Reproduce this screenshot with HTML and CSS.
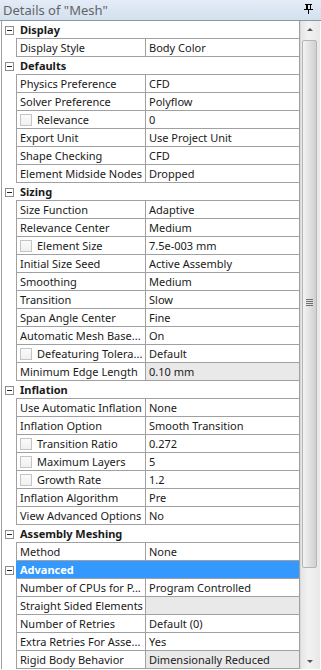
FILE: index.html
```html
<!DOCTYPE html>
<html>
<head>
  <title>Details of "Mesh"</title>
  <link rel="stylesheet" href="styles.css">
</head>
<body>
  <div class="panel">
    <div class="title-bar">
      <span class="title">Details of "Mesh"</span>
      <svg class="pin" width="9" height="10" viewBox="0 0 9 10">
        <path d="M1 0.5H8M2.5 0.5V5M6.5 0.5V5M3.5 1V5" stroke="#000" stroke-width="1" fill="none"/>
        <path d="M0 5.5H9" stroke="#000" stroke-width="1"/>
        <path d="M4.5 5.5V10" stroke="#000" stroke-width="1"/>
      </svg>
    </div>

    <div class="details">
      <div class="grid">
        <div class="row group"><span class="toggle"></span><div class="group-cell">Display</div></div>
        <div class="row"><span class="gutter"></span><div class="name">Display Style</div><div class="value">Body Color</div></div>

        <div class="row group"><span class="toggle"></span><div class="group-cell">Defaults</div></div>
        <div class="row"><span class="gutter"></span><div class="name">Physics Preference</div><div class="value">CFD</div></div>
        <div class="row"><span class="gutter"></span><div class="name">Solver Preference</div><div class="value">Polyflow</div></div>
        <div class="row"><span class="gutter"></span><div class="name"><span class="check"></span>Relevance</div><div class="value">0</div></div>
        <div class="row"><span class="gutter"></span><div class="name">Export Unit</div><div class="value">Use Project Unit</div></div>
        <div class="row"><span class="gutter"></span><div class="name">Shape Checking</div><div class="value">CFD</div></div>
        <div class="row"><span class="gutter"></span><div class="name">Element Midside Nodes</div><div class="value">Dropped</div></div>

        <div class="row group"><span class="toggle"></span><div class="group-cell">Sizing</div></div>
        <div class="row"><span class="gutter"></span><div class="name">Size Function</div><div class="value">Adaptive</div></div>
        <div class="row"><span class="gutter"></span><div class="name">Relevance Center</div><div class="value">Medium</div></div>
        <div class="row"><span class="gutter"></span><div class="name"><span class="check"></span>Element Size</div><div class="value">7.5e-003 mm</div></div>
        <div class="row"><span class="gutter"></span><div class="name">Initial Size Seed</div><div class="value">Active Assembly</div></div>
        <div class="row"><span class="gutter"></span><div class="name">Smoothing</div><div class="value">Medium</div></div>
        <div class="row"><span class="gutter"></span><div class="name">Transition</div><div class="value">Slow</div></div>
        <div class="row"><span class="gutter"></span><div class="name">Span Angle Center</div><div class="value">Fine</div></div>
        <div class="row"><span class="gutter"></span><div class="name">Automatic Mesh Base...</div><div class="value">On</div></div>
        <div class="row"><span class="gutter"></span><div class="name"><span class="check"></span>Defeaturing Tolera...</div><div class="value">Default</div></div>
        <div class="row"><span class="gutter"></span><div class="name">Minimum Edge Length</div><div class="value readonly">0.10 mm</div></div>

        <div class="row group"><span class="toggle"></span><div class="group-cell">Inflation</div></div>
        <div class="row"><span class="gutter"></span><div class="name">Use Automatic Inflation</div><div class="value">None</div></div>
        <div class="row"><span class="gutter"></span><div class="name">Inflation Option</div><div class="value">Smooth Transition</div></div>
        <div class="row"><span class="gutter"></span><div class="name"><span class="check"></span>Transition Ratio</div><div class="value">0.272</div></div>
        <div class="row"><span class="gutter"></span><div class="name"><span class="check"></span>Maximum Layers</div><div class="value">5</div></div>
        <div class="row"><span class="gutter"></span><div class="name"><span class="check"></span>Growth Rate</div><div class="value">1.2</div></div>
        <div class="row"><span class="gutter"></span><div class="name">Inflation Algorithm</div><div class="value">Pre</div></div>
        <div class="row"><span class="gutter"></span><div class="name">View Advanced Options</div><div class="value">No</div></div>

        <div class="row group"><span class="toggle"></span><div class="group-cell">Assembly Meshing</div></div>
        <div class="row"><span class="gutter"></span><div class="name">Method</div><div class="value">None</div></div>

        <div class="row group"><span class="toggle"></span><div class="group-cell selected">Advanced</div></div>
        <div class="row"><span class="gutter"></span><div class="name">Number of CPUs for P...</div><div class="value">Program Controlled</div></div>
        <div class="row"><span class="gutter"></span><div class="name">Straight Sided Elements</div><div class="value readonly"></div></div>
        <div class="row"><span class="gutter"></span><div class="name">Number of Retries</div><div class="value">Default (0)</div></div>
        <div class="row"><span class="gutter"></span><div class="name">Extra Retries For Asse...</div><div class="value">Yes</div></div>
        <div class="row"><span class="gutter"></span><div class="name">Rigid Body Behavior</div><div class="value readonly">Dimensionally Reduced</div></div>
      </div>

      <div class="scrollbar">
        <span class="arrow up"></span>
        <div class="thumb"><span class="grip"></span></div>
        <span class="arrow down"></span>
      </div>
    </div>
  </div>
</body>
</html>
```

FILE: styles.css
```css
body {
  margin: 0;
  background: #fff;
  font-family: "Noto Sans", "Open Sans", sans-serif;
  font-size: 11px;
  color: #1a1a1a;
}

.panel {
  width: 321px;
  height: 670px;
  overflow: hidden;
}

.title-bar {
  height: 20px;
  border-bottom: 1px solid #8a96a6;
  background: linear-gradient(#e3ecf7, #d4e0ef);
  display: flex;
  align-items: center;
  justify-content: space-between;
  padding: 0 8px 0 3px;
}

.title {
  color: #646464;
  font-size: 13px;
  line-height: 20px;
}

.pin {
  display: block;
  margin-top: -3px;
}

.details {
  display: flex;
  padding-left: 1px;
}

.grid {
  width: 297px;
  border-left: 1px solid #a0a0a0;
  border-right: 1px solid #a0a0a0;
}

.row {
  display: flex;
  height: 18px;
}

.gutter,
.toggle {
  width: 14px;
  flex: none;
  position: relative;
}

.toggle::before {
  content: "";
  position: absolute;
  left: 3px;
  top: 5px;
  width: 7px;
  height: 7px;
  border: 1px solid #8c8c8c;
  background: #fff;
}

.toggle::after {
  content: "";
  position: absolute;
  left: 5px;
  top: 9px;
  width: 5px;
  height: 1px;
  background: #222;
}

.name,
.value,
.group-cell {
  height: 17px;
  line-height: 17px;
  border-bottom: 1px solid #a0a0a0;
  white-space: nowrap;
  overflow: hidden;
  display: flex;
  align-items: center;
}

.name {
  width: 125px;
  flex: none;
  border-left: 1px solid #a0a0a0;
  padding-left: 3px;
}

.value {
  flex: 1;
  border-left: 1px solid #a0a0a0;
  padding-left: 3px;
}

.value.readonly {
  background: #e9e9e9;
}

.group-cell {
  flex: 1;
  padding-left: 4px;
  font-weight: bold;
}

.group-cell.selected {
  background: #3399ff;
  color: #fff;
}

.check {
  width: 10px;
  height: 10px;
  border: 1px solid #c4c4c4;
  background: linear-gradient(#fafafa, #f0f0f0);
  margin-right: 5px;
  flex: none;
}

.scrollbar {
  width: 19px;
  height: 648px;
  background: linear-gradient(90deg, #e6e6e6, #f2f2f2 40%, #e8e8e8);
  border-left: 1px solid #d8d8d8;
  position: relative;
}

.arrow {
  position: absolute;
  left: 6px;
  width: 0;
  height: 0;
  border-left: 3px solid transparent;
  border-right: 3px solid transparent;
}

.arrow.up {
  top: 7px;
  border-bottom: 3px solid #555;
}

.arrow.down {
  bottom: 6px;
  border-top: 3px solid #555;
}

.thumb {
  position: absolute;
  left: 1px;
  top: 19px;
  width: 13px;
  height: 526px;
  border: 1px solid #b5b5b5;
  border-radius: 2px;
  background: linear-gradient(90deg, #f3f3f3, #e0e0e0 55%, #cfcfcf);
}

.grip {
  position: absolute;
  left: 3px;
  top: 258px;
  width: 7px;
  height: 7px;
  background: repeating-linear-gradient(#6e6e6e 0 1px, transparent 1px 2px);
}
```
